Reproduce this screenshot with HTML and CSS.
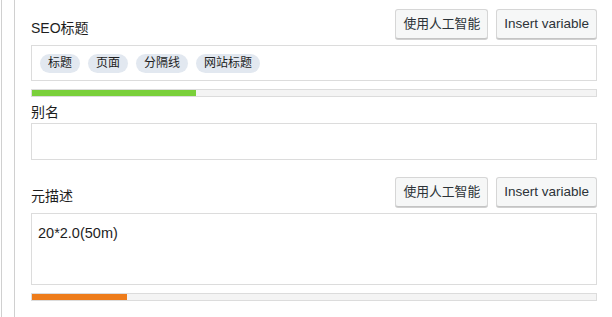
FILE: index.html
```html
<!DOCTYPE html>
<html>
<head>
<meta charset="utf-8">
<link rel="stylesheet" href="styles.css">
</head>
<body>
<div class="outer">
  <div class="inner">
    <div class="field">
      <div class="head">
        <label class="label">SEO标题</label>
        <div class="actions">
          <button class="btn btn-cjk">使用人工智能</button>
          <button class="btn">Insert variable</button>
        </div>
      </div>
      <div class="input tags">
        <span class="tag">标题</span>
        <span class="tag">页面</span>
        <span class="tag">分隔线</span>
        <span class="tag">网站标题</span>
      </div>
      <div class="progress"><div class="fill green" style="width:164px"></div></div>
    </div>

    <div class="field alias">
      <label class="label">别名</label>
      <div class="input plain"></div>
    </div>

    <div class="field meta">
      <div class="head">
        <label class="label">元描述</label>
        <div class="actions">
          <button class="btn btn-cjk">使用人工智能</button>
          <button class="btn">Insert variable</button>
        </div>
      </div>
      <div class="input area">20*2.0(50m)</div>
      <div class="progress"><div class="fill orange" style="width:95px"></div></div>
    </div>
  </div>
</div>
</body>
</html>
```
FILE: styles.css
```css
html, body {
  margin: 0;
  padding: 0;
  background: #fff;
}
body {
  font-family: "Liberation Sans", "Noto Sans CJK SC", sans-serif;
  color: #1e1e1e;
  width: 612px;
  height: 317px;
  overflow: hidden;
}
.outer {
  margin-left: 1px;
  border-left: 1px solid #d0d0d0;
  height: 317px;
}
.inner {
  margin-left: 12px;
  border-left: 1px solid #d0d0d0;
  padding: 8px 15px 0 16px;
  height: 317px;
  box-sizing: border-box;
}
.field {
  display: flex;
  flex-direction: column;
}
.head {
  display: flex;
  justify-content: space-between;
  align-items: flex-end;
  height: 31px;
  margin-bottom: 6px;
}
.label {
  font-size: 14px;
  line-height: 20px;
  margin-bottom: 1px;
}
.actions {
  display: flex;
  gap: 8px;
}
.btn {
  font-family: "Liberation Sans", "Noto Sans CJK SC", sans-serif;
  font-size: 13.5px;
  color: #2c3338;
  background: #f6f7f7;
  border: 1px solid #d6d6d6;
  border-bottom-color: #c4c4c4;
  border-radius: 3px;
  box-shadow: 0 1px 0 #d0d0d0;
  height: 30px;
  padding: 0 7px;
  line-height: 28px;
}
.btn-cjk {
  font-size: 12.8px;
}
.input {
  border: 1px solid #dcdcdc;
  box-sizing: border-box;
  background: #fff;
}
.tags {
  height: 36px;
  display: flex;
  align-items: center;
  gap: 8px;
  padding: 0 8px;
}
.tag {
  background: #e2e8f0;
  border-radius: 10px;
  font-size: 12px;
  line-height: 19px;
  height: 19px;
  padding: 0 8px;
  color: #1e1e1e;
}
.progress {
  margin-top: 8px;
  height: 8px;
  border: 1px solid #dcdcdc;
  background: #f4f4f4;
  box-sizing: border-box;
}
.fill {
  height: 6px;
}
.green { background: #7ad03a; }
.orange { background: #ee7c1b; }
.alias {
  margin-top: 5px;
}
.plain {
  height: 37px;
}
.meta {
  margin-top: 16px;
}
.area {
  height: 72px;
  padding: 10px 6px;
  font-size: 14.5px;
  line-height: 18px;
}
```
